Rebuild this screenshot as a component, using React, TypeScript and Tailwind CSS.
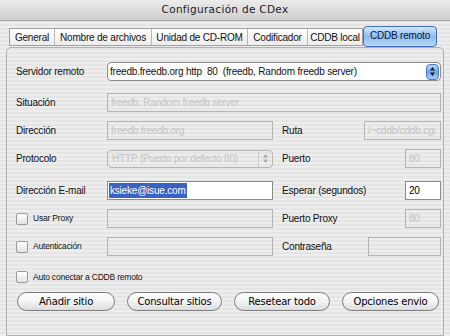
const stripes =
  "bg-[repeating-linear-gradient(0deg,#ededed_0px,#ededed_2px,#e5e5e5_2px,#e5e5e5_4px)]";

function Stepper({ active }: { active?: boolean }) {
  return (
    <div
      className={
        active
          ? "flex h-[16px] w-[13px] flex-col items-center justify-center rounded-[4px] border border-[#4a78c8] bg-gradient-to-b from-[#bcd6f6] via-[#6fa2e6] to-[#a8cdf4]"
          : "flex h-[16px] w-[13px] flex-col items-center justify-center border-l border-[#c8c8c8]"
      }
    >
      <svg width="7" height="11" viewBox="0 0 7 11">
        <path d="M3.5 1 L6 4.5 H1 Z" fill={active ? "#10203a" : "#aaaaaa"} />
        <path d="M3.5 10 L6 6.5 H1 Z" fill={active ? "#10203a" : "#aaaaaa"} />
      </svg>
    </div>
  );
}

function Field({
  w,
  text,
  white,
  children,
}: {
  w: string;
  text?: string;
  white?: boolean;
  children?: React.ReactNode;
}) {
  return (
    <div
      className={`${w} flex h-[19px] items-center overflow-hidden whitespace-nowrap border px-[3px] ${
        white
          ? "border-[#8c8c8c] bg-white text-black"
          : "border-[#b4b4b4] text-[#c4c4c4]"
      }`}
    >
      {children ?? text}
    </div>
  );
}

function Check({ label }: { label: string }) {
  return (
    <div className="flex items-center gap-[5px] text-[8.5px] text-[#111]">
      <div className="h-[12px] w-[12px] rounded-[2px] border border-[#9a9a9a] bg-gradient-to-b from-white to-[#e2e2e2]" />
      <span>{label}</span>
    </div>
  );
}

function Pill({ label, w }: { label: string; w: string }) {
  return (
    <div
      className={`${w} flex h-[19px] items-center justify-center rounded-full border border-[#7c7c7c] bg-gradient-to-b from-white via-[#f4f4f4] to-[#dcdcdc] text-[10px] text-black [font-family:'DejaVu_Sans',sans-serif]`}
    >
      {label}
    </div>
  );
}

const tabs = [
  { label: "General", w: "w-[44px]" },
  { label: "Nombre de archivos", w: "w-[97px]" },
  { label: "Unidad de CD-ROM", w: "w-[96px]" },
  { label: "Codificador", w: "w-[60px]" },
  { label: "CDDB local", w: "w-[55px]" },
];

export default function App() {
  return (
    <div
      className={`flex h-[336px] w-[450px] flex-col overflow-hidden ${stripes} text-[10px] tracking-[-0.2px] text-[#111] [font-family:'Liberation_Sans',Arial,sans-serif]`}
    >
      <div className="flex h-[21px] items-center justify-center border-b border-[#a6a6a6] bg-gradient-to-b from-[#ececec] to-[#cfcfcf] text-[10.5px] tracking-[0.3px] text-[#222] [font-family:'DejaVu_Sans',sans-serif]">
        Configuración de CDex
      </div>

      <div className="mt-[4px] flex h-[21px] items-end pl-[9px]">
        <div className="flex h-[18px] border border-[#a0a0a0] bg-gradient-to-b from-white to-[#ececec]">
          {tabs.map((t, i) => (
            <div
              key={t.label}
              className={`${t.w} flex items-center justify-center whitespace-nowrap ${
                i > 0 ? "border-l border-[#b8b8b8]" : ""
              }`}
            >
              {t.label}
            </div>
          ))}
        </div>
        <div className="-mb-[1px] flex h-[21px] w-[74px] items-center justify-center rounded-[4px] border border-[#3f6fc0] bg-gradient-to-b from-[#d3e6fb] via-[#8dbbf0] to-[#b9d9f8] pb-[3px] text-[#0c1a33]">
          CDDB remoto
        </div>
      </div>

      <div className="mx-[6px] mt-[1px] flex-1 rounded-t-[5px] border border-[#b0b0b0] pl-[9px] pt-[14px]">
        <div className="flex h-[19px] items-center">
          <span className="w-[91px]">Servidor remoto</span>
          <div className="flex h-[19px] w-[334px] items-center justify-between rounded-[4px] border border-[#8c8c8c] bg-white pl-[2px] pr-[1px]">
            <span className="whitespace-pre">
              freedb.freedb.org http  80  (freedb, Random freedb server)
            </span>
            <Stepper active />
          </div>
        </div>

        <div className="mt-[12px] flex h-[19px] items-center">
          <span className="w-[91px]">Situación</span>
          <Field w="w-[334px]" text="freedb, Random freedb server" />
        </div>

        <div className="mt-[9px] flex h-[19px] items-center">
          <span className="w-[91px]">Dirección</span>
          <Field w="w-[166px]" text="freedb.freedb.org" />
          <span className="ml-[9px] w-[82px]">Ruta</span>
          <Field w="w-[77px]" text="/~cddb/cddb.cgi" />
        </div>

        <div className="mt-[9px] flex h-[19px] items-center">
          <span className="w-[91px]">Protocolo</span>
          <div className="flex h-[18px] w-[166px] items-center justify-between rounded-[4px] border border-[#b4b4b4] pl-[4px] pr-[1px] text-[#c4c4c4]">
            <span>HTTP (Puerto por defecto 80)</span>
            <Stepper />
          </div>
          <span className="ml-[9px] w-[123px]">Puerto</span>
          <Field w="w-[36px]" text="80" />
        </div>

        <div className="mt-[13px] flex h-[19px] items-center">
          <span className="w-[91px]">Dirección E-mail</span>
          <Field w="w-[166px]" white>
            <span className="-ml-[2px] bg-[#3a62c4] px-[1px] text-white">
              ksieke@isue.com
            </span>
          </Field>
          <span className="ml-[9px] w-[123px]">Esperar (segundos)</span>
          <Field w="w-[36px]" white text="20" />
        </div>

        <div className="mt-[9px] flex h-[19px] items-center">
          <div className="w-[91px]">
            <Check label="Usar Proxy" />
          </div>
          <Field w="w-[166px]" />
          <span className="ml-[9px] w-[123px]">Puerto Proxy</span>
          <Field w="w-[36px]" text="80" />
        </div>

        <div className="mt-[9px] flex h-[19px] items-center">
          <div className="w-[91px]">
            <Check label="Autenticación" />
          </div>
          <Field w="w-[166px]" />
          <span className="ml-[9px] w-[86px]">Contraseña</span>
          <Field w="w-[73px]" />
        </div>

        <div className="mt-[14px] flex h-[14px] items-center">
          <Check label="Auto conectar a CDDB remoto" />
        </div>

        <div className="mt-[8px] flex items-center gap-[12px] pl-[1px]">
          <Pill label="Añadir sitio" w="w-[98px]" />
          <Pill label="Consultar sitios" w="w-[95px]" />
          <Pill label="Resetear todo" w="w-[96px]" />
          <Pill label="Opciones envio" w="w-[97px]" />
        </div>
      </div>
    </div>
  );
}
